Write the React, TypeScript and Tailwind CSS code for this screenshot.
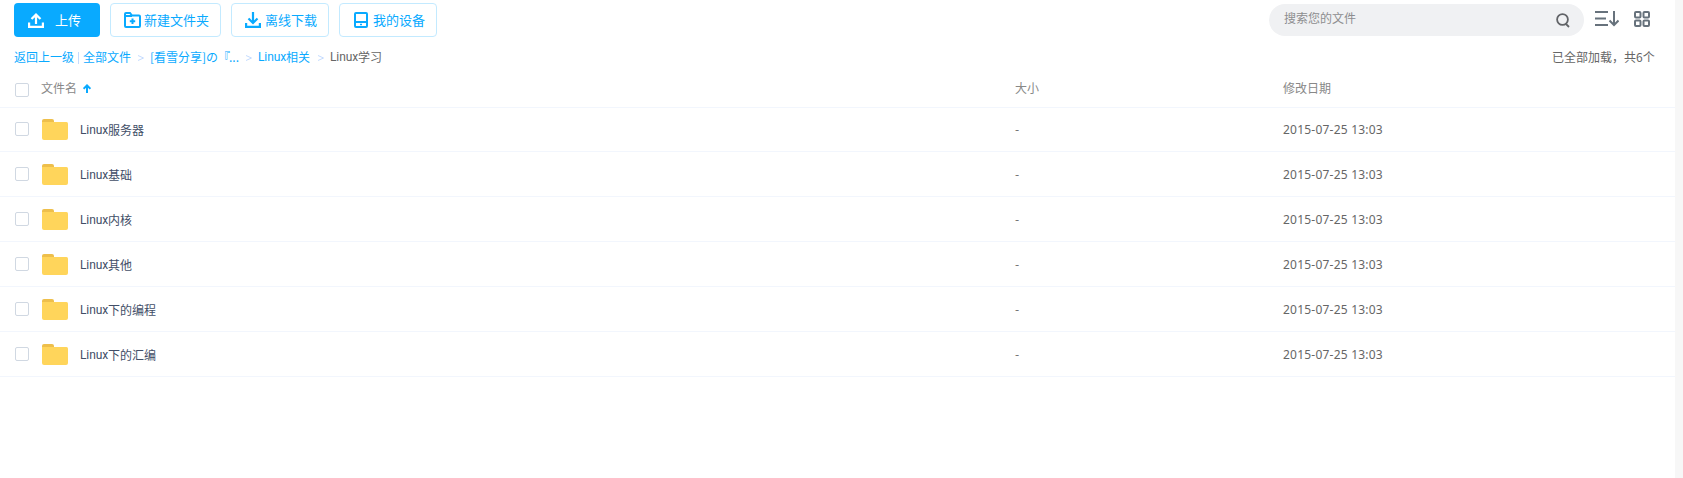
import React from "react";

const files = ["Linux|服务器", "Linux|基础", "Linux|内核", "Linux|其他", "Linux|下的编程", "Linux|下的汇编"];

function Name({ text }: { text: string }) {
  const [latin, han] = text.split("|");
  return (
    <span className="flex whitespace-nowrap">
      <span className="w-7 font-['Roboto',sans-serif] tracking-[-0.1px]">{latin}</span>
      <span>{han}</span>
    </span>
  );
}

function Checkbox() {
  return <span className="block h-3.5 w-3.5 shrink-0 rounded-[2px] border border-[#d0d8e2] bg-white" />;
}

function Folder() {
  return (
    <svg width="26" height="21" viewBox="0 0 26 21" className="shrink-0">
      <path d="M0 6V2Q0 0 2 0H10Q12 0 12 2V6Z" fill="#eebf4b" />
      <path d="M0 3H24.500Q26 3 26 4.500V19Q26 21 24 21H2Q0 21 0 19Z" fill="#ffd55b" />
    </svg>
  );
}

function UploadIcon() {
  return (
    <svg width="16" height="15" viewBox="0 0 16 15" fill="none" stroke="#fff" strokeWidth="2.200" className="shrink-0">
      <path d="M8 11V2M3.500 6L8 1.600L12.500 6M1.100 9.500V13.900H14.900V9.500" />
    </svg>
  );
}

function NewFolderIcon() {
  return (
    <svg width="17" height="16" viewBox="0 0 17 16" fill="none" stroke="#09aaff" strokeWidth="2" className="shrink-0">
      <path d="M1 5V2Q1 1 2 1H6L8 3.500H15Q16 3.500 16 4.500V14Q16 15 15 15H2Q1 15 1 14V5M1 4H8M8.500 6.500V12M5.800 9.300H11.200" />
    </svg>
  );
}

function DownloadIcon() {
  return (
    <svg width="16" height="16" viewBox="0 0 16 16" fill="none" stroke="#09aaff" strokeWidth="2.200" className="shrink-0">
      <path d="M8 0V11M3.500 6.500L8 11L12.500 6.500M1.100 11V14.900H14.900V11" />
    </svg>
  );
}

function DeviceIcon() {
  return (
    <svg width="14" height="16" viewBox="0 0 14 16" fill="none" stroke="#09aaff" strokeWidth="2" className="shrink-0">
      <rect x="1" y="1" width="12" height="14" rx="1" />
      <path d="M1 10H13" />
      <path d="M6 12.500H8" strokeWidth="1.500" />
    </svg>
  );
}

function Separator() {
  return (
    <svg width="6" height="6" viewBox="0 0 6 6" fill="none" stroke="#c4dbfe" className="mt-0.5 shrink-0">
      <path d="M0 0.500L5.500 3L0 5.500" />
    </svg>
  );
}

export default function App() {
  return (
    <div className="flex h-[478px] w-full overflow-hidden bg-white font-['Noto_Sans_CJK_SC',sans-serif] text-xs leading-4 text-[#424e67]">
      <main className="flex min-w-0 flex-1 flex-col">
        <header className="flex h-10 items-start justify-between pt-[3px] pr-[25px] pl-3.5">
          <div className="flex h-[34px] text-[13px] text-[#09aaff]">
            <button className="mr-2.5 flex w-[86px] items-center rounded bg-[#09aaff] pl-3.5 text-white">
              <UploadIcon />
              <span className="ml-[11px]">上传</span>
            </button>
            <button className="mr-2.5 flex w-[111px] items-center rounded border border-[#c3eaff] pl-[13px]">
              <NewFolderIcon />
              <span className="ml-[3px] whitespace-nowrap">新建文件夹</span>
            </button>
            <button className="mr-2.5 flex w-[98px] items-center rounded border border-[#c3eaff] pl-[13px]">
              <DownloadIcon />
              <span className="ml-1 whitespace-nowrap">离线下载</span>
            </button>
            <button className="flex w-[98px] items-center rounded border border-[#c3eaff] pl-3.5">
              <DeviceIcon />
              <span className="ml-[5px] whitespace-nowrap">我的设备</span>
            </button>
          </div>
          <div className="flex items-start pt-px">
            <label className="flex h-8 w-[315px] items-center justify-between rounded-full bg-[#f0f1f3] pr-3.5 pl-[15px] text-[#8d8d8f]">
              <span className="-mt-1">搜索您的文件</span>
              <svg width="14" height="15" viewBox="0 0 14 15" fill="none" stroke="#626468" strokeWidth="1.800">
                <circle cx="6.500" cy="6.500" r="5.400" />
                <path d="M9.500 10.500L13 14" />
              </svg>
            </label>
            <svg width="24" height="16" viewBox="0 0 24 16" fill="none" stroke="#67727c" strokeWidth="2" className="mt-[7px] ml-[11px]">
              <path d="M0 1H13M0 7.500H11M0 14H13M19 0V14M14.500 9.500L19 14L23.500 9.500" />
            </svg>
            <svg width="16" height="16" viewBox="0 0 16 16" fill="none" stroke="#67727c" strokeWidth="2" className="mt-[7px] ml-[15px]">
              <rect x="1" y="1" width="5.500" height="5.500" rx="1" />
              <rect x="9.500" y="1" width="5.500" height="5.500" rx="1" />
              <rect x="1" y="9.500" width="5.500" height="5.500" rx="1" />
              <rect x="9.500" y="9.500" width="5.500" height="5.500" rx="1" />
            </svg>
          </div>
        </header>

        <div className="flex h-[35px] items-center justify-between pr-[19px] pb-px pl-3.5">
          <nav className="flex items-center whitespace-nowrap text-[#09aaff]">
            <a className="w-16">返回上一级</a>
            <span className="mt-px mr-1 h-3 w-px bg-[#c4dbfe]" />
            <a className="w-[55px]">全部文件</a>
            <Separator />
            <a className="ml-1.5 flex w-24">
              <span className="w-1">[</span>
              <span>看雪分享</span>
              <span className="w-1">]</span>
              <span className="w-6">の『</span>
              <span className="-ml-px">...</span>
            </a>
            <Separator />
            <a className="ml-1.5 w-[60px]"><Name text="Linux|相关" /></a>
            <Separator />
            <span className="ml-1.5 text-[#666]"><Name text="Linux|学习" /></span>
          </nav>
          <span className="w-[104px] whitespace-nowrap text-[#666]">已全部加载，共6个</span>
        </div>

        <div className="flex h-[33px] shrink-0 items-center border-b border-[#f2f6fd] pb-1.5 pl-[15px] text-[#888]">
          <div className="flex w-[1000px] items-center">
            <span className="mt-[3px]"><Checkbox /></span>
            <span className="ml-3">文件名</span>
            <svg width="8" height="9" viewBox="0 0 8 9" fill="none" stroke="#09aaff" strokeWidth="2" className="ml-1.5">
              <path d="M4 9V1.500M0.600 4.800L4 1.400L7.400 4.800" />
            </svg>
          </div>
          <span className="w-[268px]">大小</span>
          <span>修改日期</span>
        </div>

        {files.map((file, i) => (
          <div key={file} className={`flex shrink-0 items-center border-b border-[#f2f6fd] pl-[15px] ${i === 0 ? "h-11" : "h-[45px] pt-px"}`}>
            <div className="flex w-[1000px] items-center">
              <span className="mb-0.5"><Checkbox /></span>
              <span className="mr-3 ml-[13px]"><Folder /></span>
              <Name text={file} />
            </div>
            <span className="mb-0.5 w-[268px] text-[#666]">-</span>
            <span className="font-['Noto_Sans',sans-serif] tracking-[0.22px] text-[#666]">2015-07-25 13:03</span>
          </div>
        ))}
      </main>
      <aside className="w-2 shrink-0 bg-[#f7f7f7]" />
    </div>
  );
}
